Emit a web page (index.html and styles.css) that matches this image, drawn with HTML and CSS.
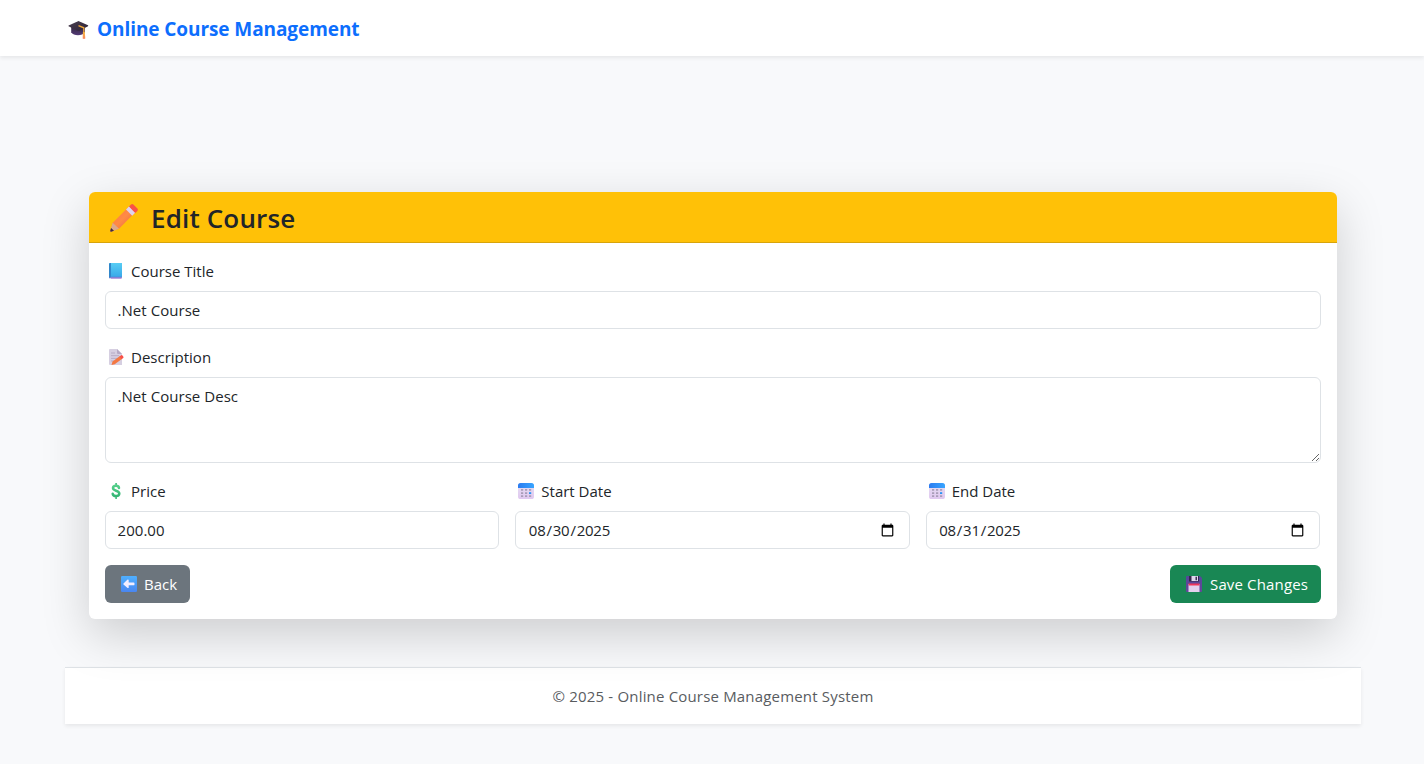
FILE: index.html
```html
<!DOCTYPE html>
<html lang="en">
<head>
<meta charset="utf-8">
<title>Edit Course</title>
<link rel="stylesheet" href="styles.css">
</head>
<body>
<svg class="defs" width="0" height="0" aria-hidden="true">
  <defs>
    <linearGradient id="cap" x1="0" y1="0" x2="1" y2="1"><stop offset="0" stop-color="#4a4050"/><stop offset="1" stop-color="#2c2135"/></linearGradient>
    <linearGradient id="capBase" x1="0" y1="0" x2="0" y2="1"><stop offset="0" stop-color="#342840"/><stop offset="1" stop-color="#543b78"/></linearGradient>
    <linearGradient id="tassel" x1="0" y1="0" x2="0" y2="1"><stop offset="0" stop-color="#f5b83d"/><stop offset="1" stop-color="#fb8560"/></linearGradient>
    <linearGradient id="pencil" x1="0" y1="0" x2="1" y2="1"><stop offset="0" stop-color="#ff713f"/><stop offset=".5" stop-color="#ff8b45"/><stop offset="1" stop-color="#e55a3c"/></linearGradient>
    <linearGradient id="book" x1="0" y1="0" x2="0" y2="1"><stop offset="0" stop-color="#58cdf4"/><stop offset="1" stop-color="#36a6e8"/></linearGradient>
    <linearGradient id="dollar" x1="0" y1="0" x2="0" y2="1"><stop offset="0" stop-color="#55cf8a"/><stop offset="1" stop-color="#35b574"/></linearGradient>
    <linearGradient id="calTop" x1="0" y1="0" x2="1" y2="0"><stop offset="0" stop-color="#2b7cf0"/><stop offset="1" stop-color="#38a5ff"/></linearGradient>
    <linearGradient id="calBody" x1="0" y1="0" x2="0" y2="1"><stop offset="0" stop-color="#e6e0f2"/><stop offset="1" stop-color="#e0c8f0"/></linearGradient>
    <linearGradient id="arrowBg" x1="0" y1="0" x2="0" y2="1"><stop offset="0" stop-color="#4fb0ff"/><stop offset="1" stop-color="#4a86f0"/></linearGradient>
    <linearGradient id="disk" x1="0" y1="0" x2="0" y2="1"><stop offset="0" stop-color="#54489a"/><stop offset="1" stop-color="#66469a"/></linearGradient>
    <symbol id="calendar" viewBox="0 0 16 16">
      <rect width="16" height="16" rx="2.6" fill="url(#calBody)"/>
      <path d="M0 5V2.6A2.6 2.6 0 0 1 2.6 0h10.8A2.6 2.6 0 0 1 16 2.6V5z" fill="url(#calTop)"/>
      <path d="M3 6.100h2.200v1.700H3zM7 6.100h2.200v1.700H7zM11 6.100h2.200v1.700H11zM3 9.200h2.200v1.700H3zM7 9.200h2.200v1.700H7zM3 12.300h2.200V14H3zM7 12.300h2.200V14H7zM11 12.300h2.200V14H11z" fill="#a99db8"/>
      <rect x="11" y="9.200" width="2.200" height="1.800" fill="#2a94f5"/>
    </symbol>
  </defs>
</svg>

<header class="navbar">
  <a class="brand">
    <svg class="brand-icon" width="21" height="20" viewBox="0 0 21 20">
      <path d="M3.200 7v5.300c2 3.900 11.500 3.900 13.700 0V7z" fill="url(#capBase)"/>
      <path d="M10 1.200Q10.500 1 11 1.200L20 5.300Q20.500 5.800 20 6.200L11.500 10.700Q10.500 11 9.500 10.700L.6 6.300Q.2 5.800.6 5.400z" fill="url(#cap)"/>
      <path d="M10.500 5.600l5.300 2.200v6" fill="none" stroke="#f0a93c" stroke-width="1.300"/>
      <path d="M14.900 12h1.900l.5 6.600q-1.300.7-2.600 0z" fill="url(#tassel)"/>
    </svg>
    <span class="brand-text">Online Course Management</span>
  </a>
</header>

<main class="container">
  <section class="card">
    <div class="card-header">
      <svg class="header-icon" width="30" height="30" viewBox="0 0 30 30">
        <path d="M4 19.500L20.500 3l6 6L10 25.800l-8 2.700q-1 .1-.8-.8z" fill="url(#pencil)"/>
        <path d="M3.700 19.800L1.200 27.700q-.1 1.100 1 1L10 25.800z" fill="#dca98b"/>
        <path d="M2.100 25L1.200 27.700q-.1 1.100 1 1l2.800-.9z" fill="#432c3c"/>
        <path d="M17 6.500l6.200 6.200 3.200-3.200-6.200-6.200z" fill="#dfd3ef"/>
        <path d="M20 3.500l2-2q1.200-1 2.400 0l4 4q1.100 1.200 0 2.400l-2.200 2z" fill="#fa5246"/>
      </svg>
      <h3 class="card-title">Edit Course</h3>
    </div>
    <form class="card-body">
      <div class="field">
        <label class="label" for="title">
          <svg class="label-icon" width="20" height="16" viewBox="0 0 20 16"><path d="M4 0h10.500v15.500H4z" fill="#9673d0"/><path d="M4 13.500h10.500v2H4z" fill="#a98ad8"/><path d="M2 1.200Q2 0 3.200 0H15v14H3.500Q2.500 14 2 15z" fill="url(#book)"/><path d="M2 1.200Q2 0 3.200 0H4v14l-2 1z" fill="#3187ca"/><path d="M2 14.500q.5-.8 1.500-.8H15v.8H4q-.7.300-.7 1.200-1-.1-1.300-1.200z" fill="#5c78ce"/></svg>
          <span>Course Title</span>
        </label>
        <input class="control" id="title" type="text" value=".Net Course">
      </div>
      <div class="field">
        <label class="label" for="desc">
          <svg class="label-icon" width="20" height="16" viewBox="0 0 20 16"><path d="M2 1q0-1 1-1h7l5 5v11H3q-1 0-1-1z" fill="#d6cfe1"/><path d="M10 0v4q0 1 1 1h4z" fill="#b5a9c4"/><path d="M4 4h4M4 6.700h8M4 9.400h7M4 12h3" stroke="#b4a8c2" stroke-width=".9"/><path d="M5.500 12.500l7.500-5.600 2.200 2.800-7.500 5.500-3.200.7z" fill="#f47842"/><path d="M12.500 7.400L14.200 6.200q.8-.3 1.300.4l.9 1.200q.4.800-.2 1.300l-1.600 1.200z" fill="#f95048"/></svg>
          <span>Description</span>
        </label>
        <textarea class="control control-area" id="desc" rows="3">.Net Course Desc</textarea>
      </div>
      <div class="row">
        <div>
          <label class="label" for="price">
            <svg class="label-icon" width="20" height="16" viewBox="0 0 20 16"><path d="M8.300 0h1.600v2.500H8.300zM8.300 13.300h1.600V16H8.300z" fill="#3fbd7b"/><path d="M12 5C11.600 1.900 6 2.100 6 5.100c0 3.200 6.300 2.200 6.300 5.500 0 3.200-6.100 3.400-6.600.1" fill="none" stroke="url(#dollar)" stroke-width="2.500" stroke-linecap="round"/></svg>
            <span>Price</span>
          </label>
          <input class="control" id="price" type="text" value="200.00">
        </div>
        <div>
          <label class="label" for="start">
            <svg class="label-icon cal" width="16" height="16"><use href="#calendar"/></svg>
            <span>Start Date</span>
          </label>
          <input class="control control-date" id="start" type="date" value="2025-08-30">
        </div>
        <div>
          <label class="label" for="end">
            <svg class="label-icon cal" width="16" height="16"><use href="#calendar"/></svg>
            <span>End Date</span>
          </label>
          <input class="control control-date" id="end" type="date" value="2025-08-31">
        </div>
      </div>
      <div class="actions">
        <a class="btn btn-back">
          <svg width="16" height="16" viewBox="0 0 16 16"><rect width="16" height="16" rx="1.200" fill="url(#arrowBg)"/><path d="M2.500 7.500L6.600 3.600q1-.5 1.100.6v2.200h5q.8.100.8 1v1q-.1.900-.8.900h-5v2.100q-.1 1.100-1.100.5L2.500 8.500q-.4-.5 0-1z" fill="#f3edff"/></svg>
          <span>Back</span>
        </a>
        <button class="btn btn-save" type="button">
          <svg width="16" height="16" viewBox="0 0 16 16"><path d="M0 1q0-1 1-1h13l2 2v13q0 1-1 1H1q-1 0-1-1z" fill="url(#disk)"/><path d="M3 0h10v5.500H3z" fill="#34264b"/><path d="M5.500 0H12v5H5.500z" fill="#ded6ec"/><path d="M9.500.7h1.500v3.500H9.500z" fill="#3d2c54"/><path d="M2.500 8h11v8h-11z" fill="#e3d1ee"/><path d="M2.500 7.500h11v2h-11z" fill="#ef365b"/></svg>
          <span>Save Changes</span>
        </button>
      </div>
    </form>
  </section>
  <footer class="footer">© 2025 - Online Course Management System</footer>
</main>
</body>
</html>
```
FILE: styles.css
```css
* { box-sizing: border-box; }
body {
  margin: 0;
  min-height: 764px;
  background: #f8f9fb;
  color: #212529;
  font-family: "Open Sans", "Noto Sans", sans-serif;
  font-size: 15px;
  line-height: 24px;
  overflow: hidden;
}
.defs { display: block; position: absolute; }
.navbar {
  height: 56px;
  padding: 0 68px;
  display: flex;
  align-items: center;
  background: #fff;
  box-shadow: 0 2px 4px rgba(0, 0, 0, .075);
}
.brand {
  display: flex;
  align-items: center;
  gap: 8px;
  color: #0d6efd;
  font-size: 19px;
  font-weight: 700;
  padding-top: 2px;
}
.brand-icon { margin-top: 2px; }
.brand-text { letter-spacing: -.08px; }
.container { padding: 136px 63px 0 65px; }
.card {
  position: relative;
  margin: 0 24px;
  background: #fff;
  border-radius: 6px;
  box-shadow: 0 16px 48px rgba(0, 0, 0, .175);
}
.card-header {
  height: 51px;
  padding: 0 19px 0 20px;
  display: flex;
  align-items: center;
  gap: 12px;
  background: #ffc107;
  border-bottom: 1px solid #d8a40a;
  border-radius: 6px 6px 0 0;
}
.header-icon { margin-top: 2px; }
.card-title {
  margin: 0;
  padding-top: 1px;
  font-size: 26px;
  font-weight: 600;
  line-height: 34px;
  letter-spacing: .15px;
}
.card-body { padding: 16px; }
.field { margin-bottom: 16px; }
.label {
  height: 24px;
  margin-bottom: 8px;
  display: flex;
  align-items: center;
}
.label-icon { width: 20px; margin: 0 4px 0 2px; flex: none; }
.label-icon.cal { width: 16px; margin: 0 7px 0 3px; }
.control {
  display: block;
  width: 100%;
  height: 38px;
  margin: 0;
  padding: 6px 11.5px;
  background: #fff;
  border: 1px solid #dee2e6;
  border-radius: 6px;
  color: #212529;
  font: inherit;
  letter-spacing: .05px;
  outline: none;
}
.control-area { height: 86px; resize: vertical; }
.control-date { padding-right: 12px; letter-spacing: -.25px; }
.row {
  display: grid;
  grid-template-columns: repeat(3, 1fr);
  gap: 16px;
  margin-bottom: 16px;
  padding-right: 1px;
}
.actions { display: flex; justify-content: space-between; }
.btn {
  height: 38px;
  padding: 0 0 0 16px;
  display: flex;
  align-items: center;
  gap: 7px;
  border: 0;
  border-radius: 6px;
  color: #fff;
  font: inherit;
  white-space: nowrap;
}
.btn-back { width: 85px; background: #6c757d; }
.btn-save { width: 151px; gap: 8px; background: #198754; letter-spacing: .15px; }
.footer {
  height: 57px;
  margin-top: 48px;
  display: flex;
  align-items: center;
  justify-content: center;
  background: #fff;
  border-top: 1px solid #dee2e6;
  box-shadow: 0 2px 4px rgba(0, 0, 0, .075);
  color: #595c5f;
  letter-spacing: .18px;
}
```
